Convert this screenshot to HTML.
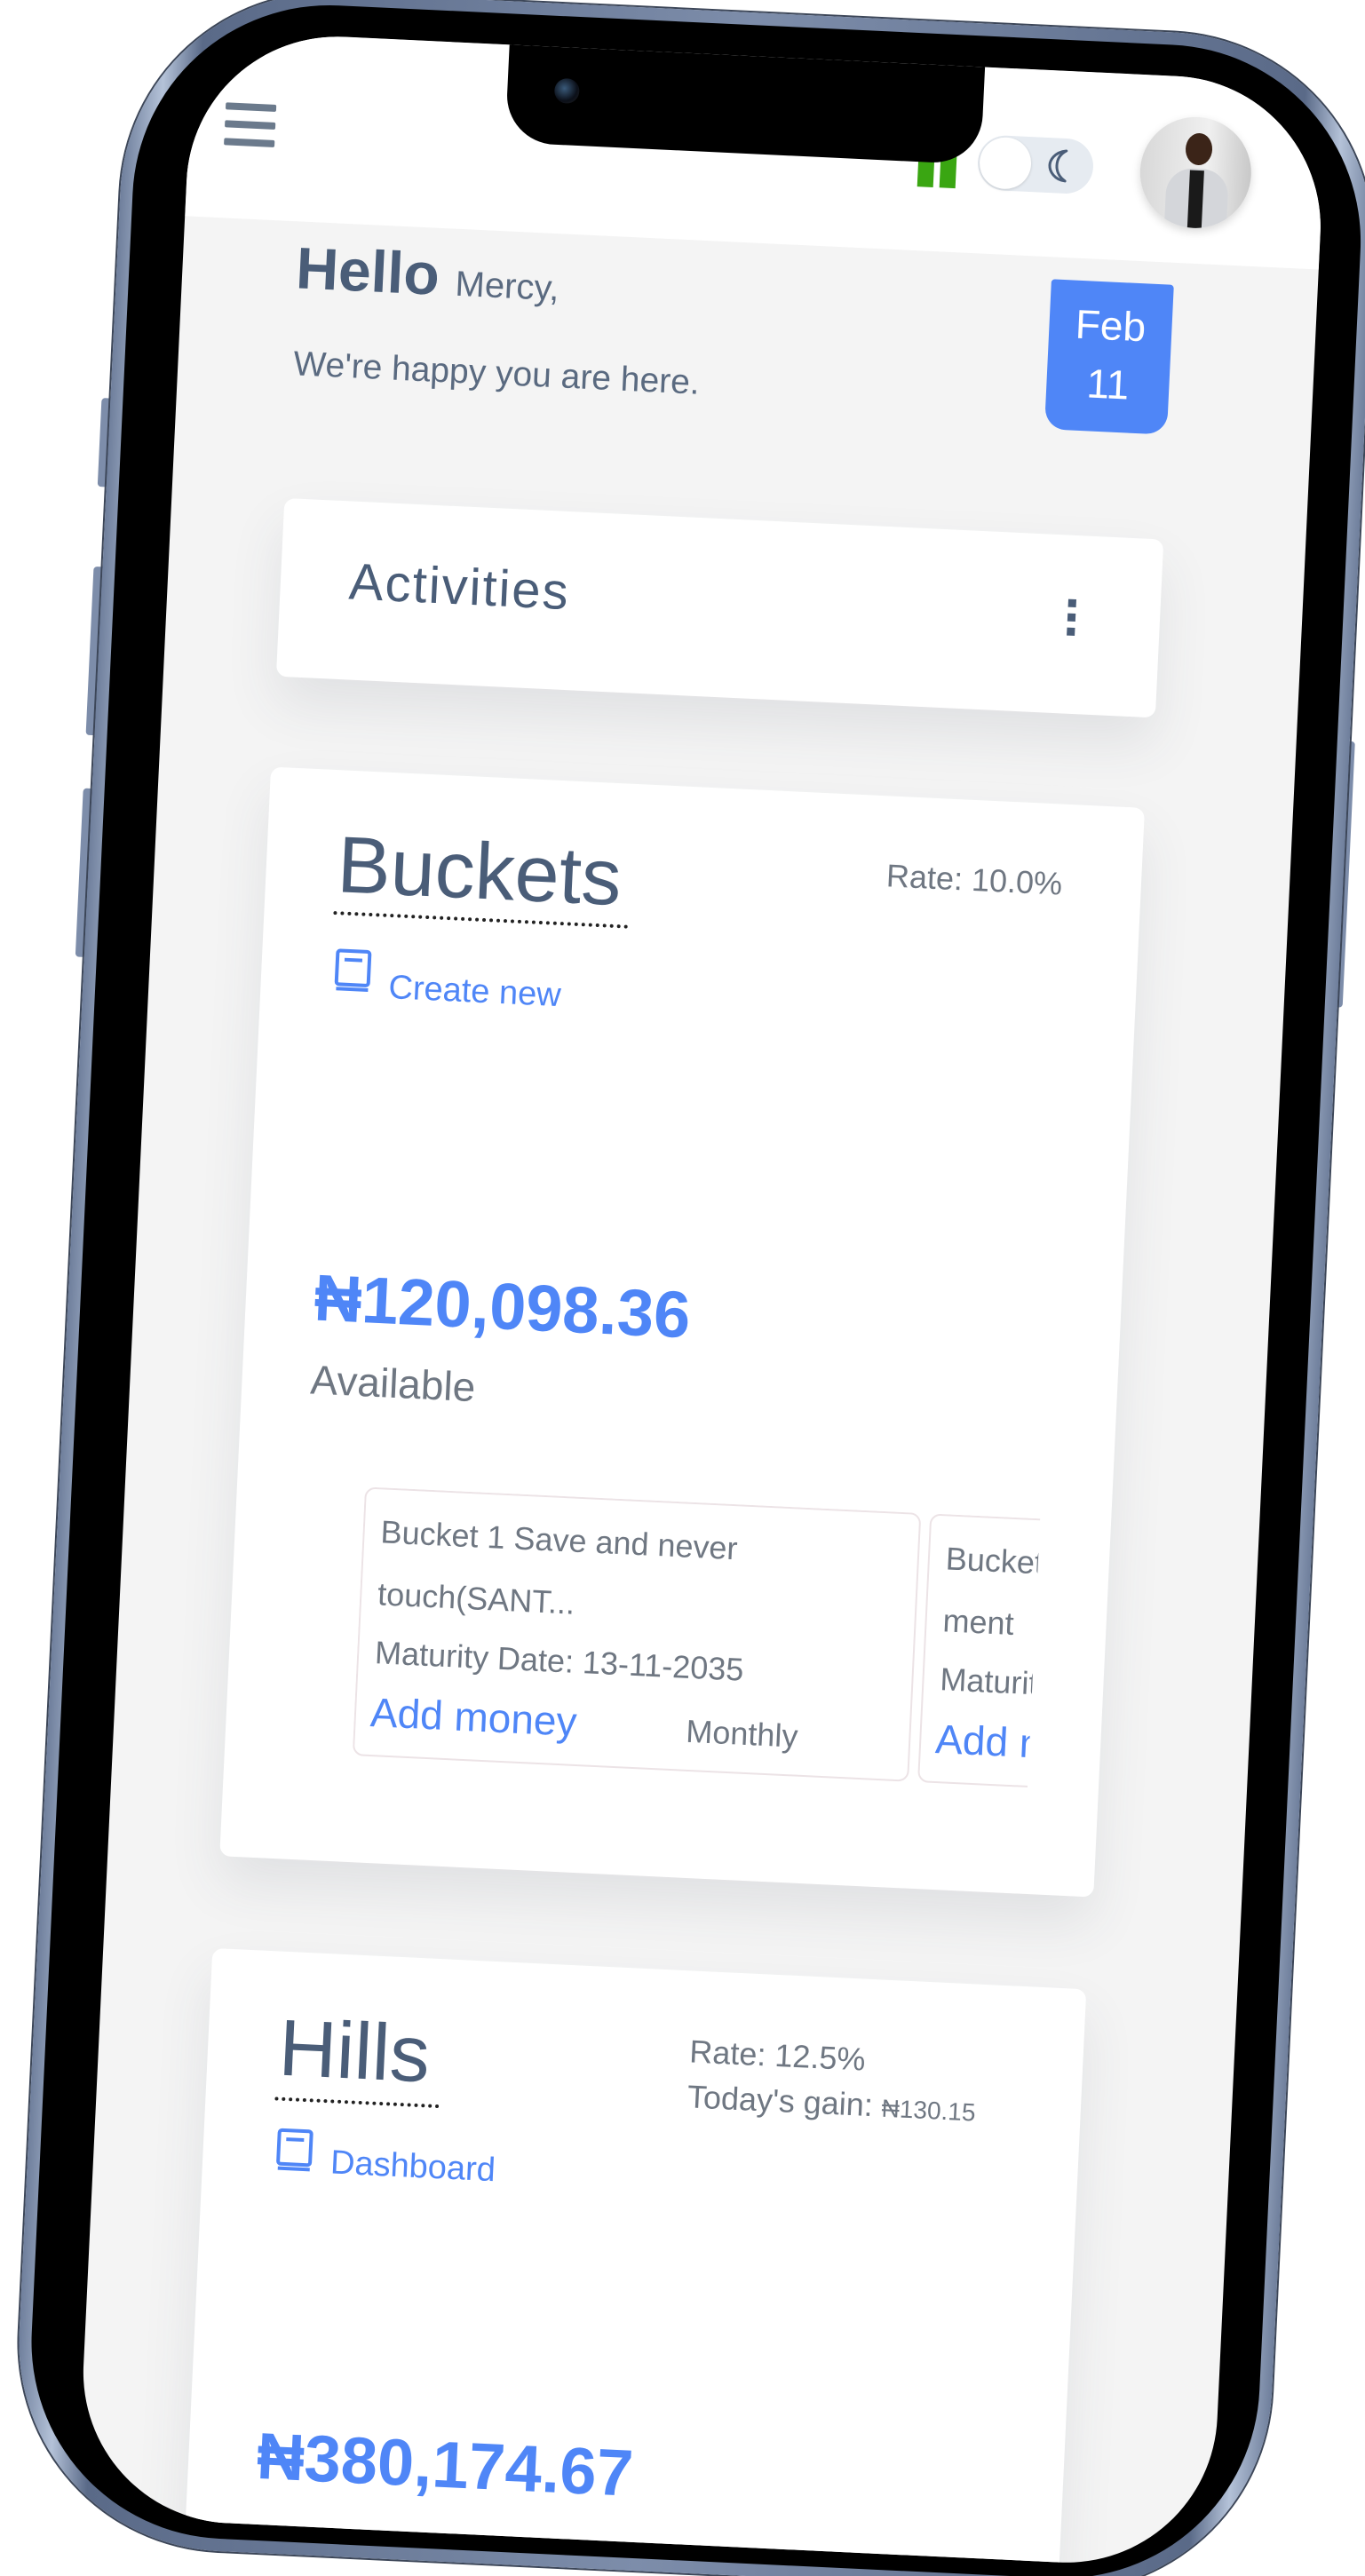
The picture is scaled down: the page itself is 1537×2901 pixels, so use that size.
<!DOCTYPE html>
<html><head><meta charset="utf-8">
<style>
html,body{margin:0;padding:0;background:#fff;overflow:hidden;width:1537px;height:2901px;}
body{position:relative;font-family:"Liberation Sans",sans-serif;}
#wrap{position:absolute;left:0;top:0;width:1537px;height:2901px;overflow:hidden;}
#rot{position:absolute;left:0;top:0;width:1537px;height:2901px;transform:rotate(2.7deg);transform-origin:768px 1450px;}
.abs{position:absolute;}
#outer{left:78px;top:12px;width:1412px;height:2884px;border-radius:235px;background:linear-gradient(90deg,#6f7f9c,#b4c2d8 3%,#5a6a88 6%,#7d8daa 50%,#5a6a88 94%,#b4c2d8 97%,#6f7f9c);box-shadow:0 0 0 2px #3c4658;}
#bezel{left:92px;top:26px;width:1384px;height:2856px;border-radius:222px;background:#000;}
#screen{left:152px;top:61px;width:1278px;height:2803px;border-radius:170px;background:#f4f4f4;overflow:hidden;}
.btn{background:#7d8daa;border-radius:4px;width:12px;}
.txt{position:absolute;white-space:nowrap;line-height:1;}
.card{position:absolute;background:#fff;border-radius:12px;box-shadow:0 30px 60px rgba(60,70,90,0.10);}
.dark{color:#4a5d78;}
.gray{color:#6f7782;}
.blue{color:#4f86f7;}
.item{position:absolute;top:0;width:627px;height:303px;border:2px solid #ece3e6;border-radius:12px;background:#fff;box-sizing:border-box;}
</style></head><body>
<div id="wrap">
<div id="rot">
  <div class="abs btn" style="left:68px;top:480px;height:100px;"></div>
  <div class="abs btn" style="left:68px;top:670px;height:190px;"></div>
  <div class="abs btn" style="left:68px;top:920px;height:190px;"></div>
  <div class="abs btn" style="left:1484px;top:800px;height:300px;"></div>
  <div id="outer" class="abs"></div>
  <div id="bezel" class="abs"></div>
  <div id="screen" class="abs">
    <div class="abs" style="left:0;top:0;width:1278px;height:210px;background:#fff;"></div>
    <div class="abs" style="left:40px;top:80px;width:57px;height:8px;background:#6b7a8c;border-radius:2px;"></div>
    <div class="abs" style="left:40px;top:100px;width:57px;height:8px;background:#6b7a8c;border-radius:2px;"></div>
    <div class="abs" style="left:40px;top:120px;width:57px;height:8px;background:#6b7a8c;border-radius:2px;"></div>
    <div class="abs" style="left:822px;top:80px;width:18px;height:58px;background:#3aa612;"></div>
    <div class="abs" style="left:847px;top:80px;width:18px;height:58px;background:#3aa612;"></div>
    <div class="abs" style="left:356px;top:-20px;width:536px;height:130px;background:#000;border-radius:0 0 55px 55px;"></div>
    <div class="abs" style="left:409px;top:35px;width:28px;height:28px;border-radius:50%;background:radial-gradient(circle at 40% 40%,#3a5a7a,#0b0f18 60%,#222 100%);"></div>
    <div class="abs" style="left:889px;top:76px;width:130px;height:62px;border-radius:31px;background:#e6ebf1;"></div>
    <div class="abs" style="left:891px;top:78px;width:58px;height:58px;border-radius:50%;background:#fff;box-shadow:0 1px 3px rgba(0,0,0,0.15);"></div>
    <svg class="abs" style="left:962px;top:86px;" width="40" height="42" viewBox="0 0 40 42"><path d="M26 4 C12 6 8 16 8 21 C8 28 14 37 26 38 C18 33 16 26 16 21 C16 14 19 8 26 4 Z" fill="none" stroke="#4a5d78" stroke-width="3" stroke-linejoin="round"/></svg>
    <div class="abs" style="left:1072px;top:45px;width:125px;height:125px;border-radius:50%;background:linear-gradient(90deg,#d8d8d8,#f0f0f0 60%,#c8c8c8);overflow:hidden;box-shadow:0 4px 10px rgba(0,0,0,0.15);">
      <div class="abs" style="left:50px;top:18px;width:30px;height:36px;border-radius:50%;background:#3b2418;"></div>
      <div class="abs" style="left:30px;top:58px;width:70px;height:80px;border-radius:30px 30px 0 0;background:#d4d6da;"></div>
      <div class="abs" style="left:56px;top:60px;width:16px;height:70px;background:#1a1a1a;"></div>
    </div>
    <div class="txt dark" style="left:128px;top:229px;font-size:66px;font-weight:bold;">Hello <span style="font-size:40px;font-weight:normal;color:#5a6a80;">Mercy,</span></div>
    <div class="txt" style="left:130px;top:351px;font-size:39px;color:#5a6a80;">We're happy you are here.</div>
    <div class="abs" style="left:978px;top:235px;width:138px;height:169px;background:#4f86f7;border-radius:4px 4px 24px 24px;color:#fff;font-size:46px;text-align:center;line-height:66px;padding-top:16px;box-sizing:border-box;">Feb<br>11</div>
    <div class="card" style="left:127px;top:522px;width:991px;height:201px;">
      <div class="txt dark" style="left:77px;top:62px;font-size:58px;letter-spacing:2px;">Activities</div>
      <div class="abs" style="left:887px;top:72px;width:9px;height:9px;background:#4a5d78;"></div>
      <div class="abs" style="left:887px;top:88px;width:9px;height:9px;background:#4a5d78;"></div>
      <div class="abs" style="left:887px;top:104px;width:9px;height:9px;background:#4a5d78;"></div>
    </div>
    <div class="card" style="left:126px;top:825px;width:985px;height:1228px;">
      <div class="txt dark" style="left:80px;top:62px;font-size:90px;">Buckets</div>
      <div class="abs" style="left:78px;top:159px;width:332px;border-top:4px dotted #222;"></div>
      <svg class="abs" style="left:82px;top:200px;" width="42" height="50" viewBox="0 0 42 50"><rect x="3" y="3" width="36" height="38" rx="3" fill="none" stroke="#4f86f7" stroke-width="4"/><line x1="11" y1="13" x2="31" y2="13" stroke="#4f86f7" stroke-width="4"/><line x1="3" y1="46" x2="39" y2="46" stroke="#4f86f7" stroke-width="4"/></svg>
      <div class="txt blue" style="left:144px;top:223px;font-size:38px;">Create new</div>
      <div class="txt gray" style="left:698px;top:72px;font-size:36px;">Rate: 10.0%</div>
      <div class="txt blue" style="left:77px;top:558px;font-size:74px;font-weight:bold;">₦120,098.36</div>
      <div class="txt gray" style="left:77px;top:664px;font-size:46px;">Available</div>
      <div class="abs" style="left:144px;top:805px;width:761px;height:310px;overflow:hidden;">
        <div class="item" style="left:0;">
          <div class="txt gray" style="left:18px;top:30px;font-size:36px;">Bucket 1 Save and never</div>
          <div class="txt gray" style="left:18px;top:100px;font-size:36px;">touch(SANT...</div>
          <div class="txt gray" style="left:18px;top:166px;font-size:36px;">Maturity Date: 13-11-2035</div>
          <div class="txt blue" style="left:16px;top:228px;font-size:46px;">Add money</div>
          <div class="txt gray" style="left:372px;top:238px;font-size:36px;">Monthly</div>
        </div>
        <div class="item" style="left:637px;">
          <div class="txt gray" style="left:18px;top:30px;font-size:36px;">Bucket 2 Retire</div>
          <div class="txt gray" style="left:18px;top:100px;font-size:36px;">ment</div>
          <div class="txt gray" style="left:18px;top:166px;font-size:36px;">Maturity</div>
          <div class="txt blue" style="left:16px;top:228px;font-size:46px;">Add money</div>
        </div>
      </div>
    </div>
    <div class="card" style="left:123px;top:2157px;width:985px;height:900px;">
      <div class="txt dark" style="left:80px;top:64px;font-size:90px;">Hills</div>
      <div class="abs" style="left:78px;top:164px;width:185px;border-top:4px dotted #222;"></div>
      <svg class="abs" style="left:82px;top:198px;" width="42" height="50" viewBox="0 0 42 50"><rect x="3" y="3" width="36" height="38" rx="3" fill="none" stroke="#4f86f7" stroke-width="4"/><line x1="11" y1="13" x2="31" y2="13" stroke="#4f86f7" stroke-width="4"/><line x1="3" y1="46" x2="39" y2="46" stroke="#4f86f7" stroke-width="4"/></svg>
      <div class="txt blue" style="left:144px;top:216px;font-size:38px;">Dashboard</div>
      <div class="txt gray" style="left:542px;top:73px;font-size:36px;">Rate: 12.5%</div>
      <div class="txt gray" style="left:542px;top:124px;font-size:36px;">Today's gain: <span style="font-size:28px;">₦130.15</span></div>
      <div class="txt blue" style="left:77px;top:532px;font-size:74px;font-weight:bold;">₦380,174.67</div>
    </div>
  </div>
</div>
</div>
</body></html>
